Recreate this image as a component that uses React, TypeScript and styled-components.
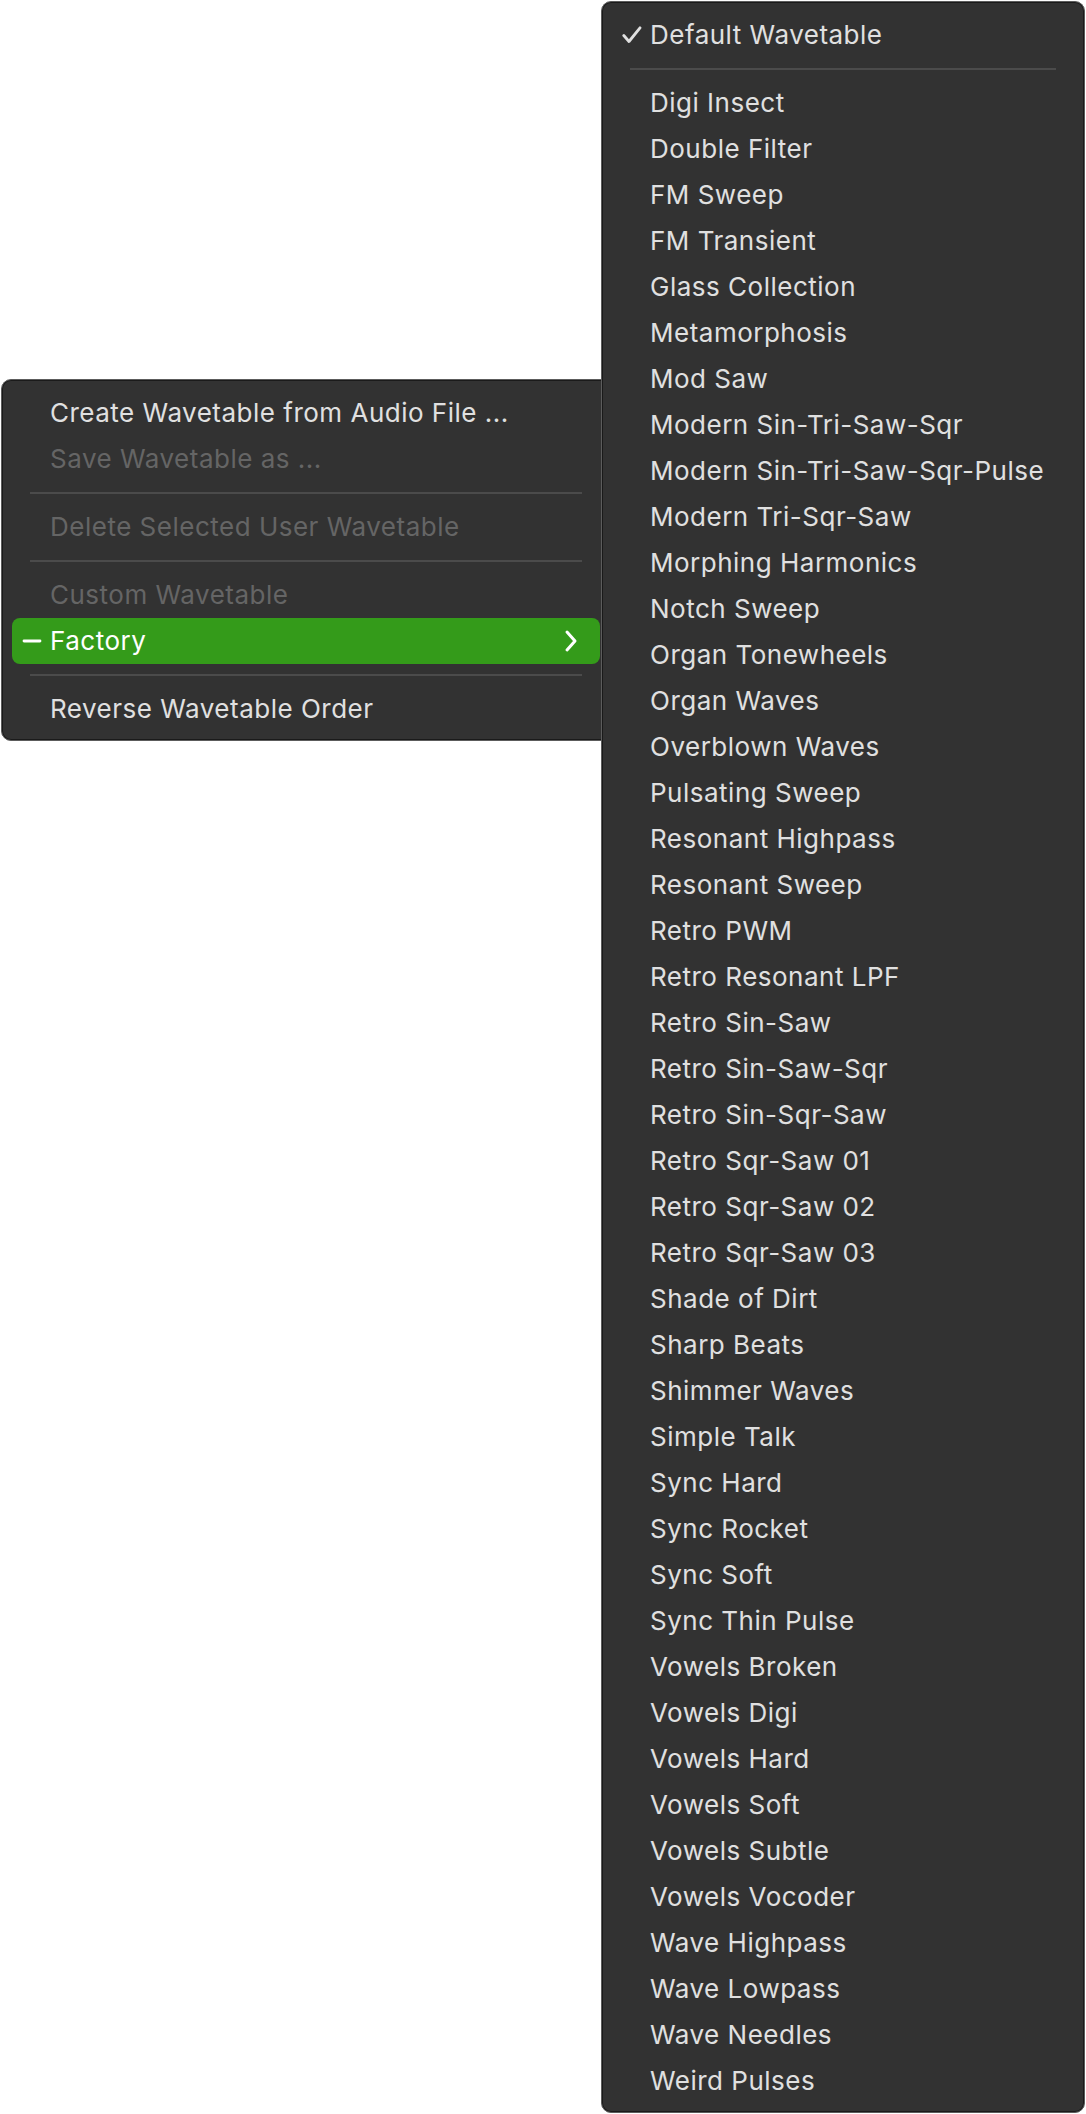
import React from "react"
import styled, { createGlobalStyle } from "styled-components"

const GlobalStyle = createGlobalStyle`
  html, body {
    margin: 0;
    padding: 0;
    background: #ffffff;
  }
  body {
    font-family: Inter, "Noto Sans", "Liberation Sans", sans-serif;
    -webkit-font-smoothing: antialiased;
  }
`

const factory = [
  "Digi Insect", "Double Filter", "FM Sweep", "FM Transient", "Glass Collection",
  "Metamorphosis", "Mod Saw", "Modern Sin-Tri-Saw-Sqr", "Modern Sin-Tri-Saw-Sqr-Pulse",
  "Modern Tri-Sqr-Saw", "Morphing Harmonics", "Notch Sweep", "Organ Tonewheels",
  "Organ Waves", "Overblown Waves", "Pulsating Sweep", "Resonant Highpass",
  "Resonant Sweep", "Retro PWM", "Retro Resonant LPF", "Retro Sin-Saw",
  "Retro Sin-Saw-Sqr", "Retro Sin-Sqr-Saw", "Retro Sqr-Saw 01", "Retro Sqr-Saw 02",
  "Retro Sqr-Saw 03", "Shade of Dirt", "Sharp Beats", "Shimmer Waves", "Simple Talk",
  "Sync Hard", "Sync Rocket", "Sync Soft", "Sync Thin Pulse", "Vowels Broken",
  "Vowels Digi", "Vowels Hard", "Vowels Soft", "Vowels Subtle", "Vowels Vocoder",
  "Wave Highpass", "Wave Lowpass", "Wave Needles", "Weird Pulses",
]

const Check = () => (
  <svg width="20" height="18" viewBox="0 0 20 18">
    <path d="M1.8 9.5 L7 15.5 L18 1.8" fill="none" stroke="currentColor" strokeWidth="2.8"
      strokeLinecap="round" strokeLinejoin="round" />
  </svg>
)

const Dash = () => (
  <svg width="20" height="16" viewBox="0 0 20 16">
    <path d="M2 8 H18" fill="none" stroke="currentColor" strokeWidth="2.8" strokeLinecap="round" />
  </svg>
)

const Chevron = () => (
  <svg width="14" height="24" viewBox="0 0 14 24">
    <path d="M3 3 L11 12 L3 21" fill="none" stroke="currentColor" strokeWidth="3"
      strokeLinecap="round" strokeLinejoin="round" />
  </svg>
)

export default function App() {
  return <>
    <GlobalStyle />
    <Stage>
      <Menu $width={610} $top={379} $radius="10px 0 0 10px">
        <Item>Create Wavetable from Audio File ...</Item>
        <Item $disabled>Save Wavetable as ...</Item>
        <Separator />
        <Item $disabled>Delete Selected User Wavetable</Item>
        <Separator />
        <Item $disabled>Custom Wavetable</Item>
        <Item $active>
          <Mark><Dash /></Mark>
          <Label>Factory</Label>
          <Arrow><Chevron /></Arrow>
        </Item>
        <Separator />
        <Item>Reverse Wavetable Order</Item>
      </Menu>
      <Menu $width={484} $top={1} $radius="10px" $overlap>
        <Item>
          <Mark><Check /></Mark>
          <Label>Default Wavetable</Label>
        </Item>
        <Separator />
        {factory.map(name => <Item key={name}>{name}</Item>)}
      </Menu>
    </Stage>
  </>
}

const Stage = styled.div`
  display: flex;
  align-items: flex-start;
`

const Menu = styled.div<{ $width: number; $top: number; $radius: string; $overlap?: boolean }>`
  box-sizing: border-box;
  width: ${p => p.$width}px;
  margin-top: ${p => p.$top}px;
  margin-left: ${p => (p.$overlap ? -10 : 1)}px;
  position: relative;
  z-index: ${p => (p.$overlap ? 2 : 1)};
  padding: 10px 0 8px;
  background: #323232;
  border: 1px solid #5c5c5c;
  border-radius: ${p => p.$radius};
  box-shadow: inset 0 0 0 1px #1a1a1a;
`

const Item = styled.div<{ $disabled?: boolean; $active?: boolean }>`
  display: flex;
  align-items: center;
  height: 46px;
  margin: 0 10px;
  padding: 0 22px 0 38px;
  border-radius: 8px;
  font-size: 26px;
  letter-spacing: 0.5px;
  line-height: 46px;
  white-space: nowrap;
  color: ${p => (p.$active ? "#ffffff" : p.$disabled ? "#656565" : "#e0e0e0")};
  background: ${p => (p.$active ? "#349b1a" : "transparent")};

  &:has(svg) {
    padding-left: 10px;
  }
`

const Mark = styled.span`
  display: flex;
  align-items: center;
  width: 20px;
  margin-right: 8px;
  color: inherit;
`

const Label = styled.span`
  flex: 1;
`

const Arrow = styled.span`
  display: flex;
  align-items: center;
  color: #ffffff;
`

const Separator = styled.div`
  height: 2px;
  margin: 10px 28px 10px 28px;
  background: #4b4b4b;
`
